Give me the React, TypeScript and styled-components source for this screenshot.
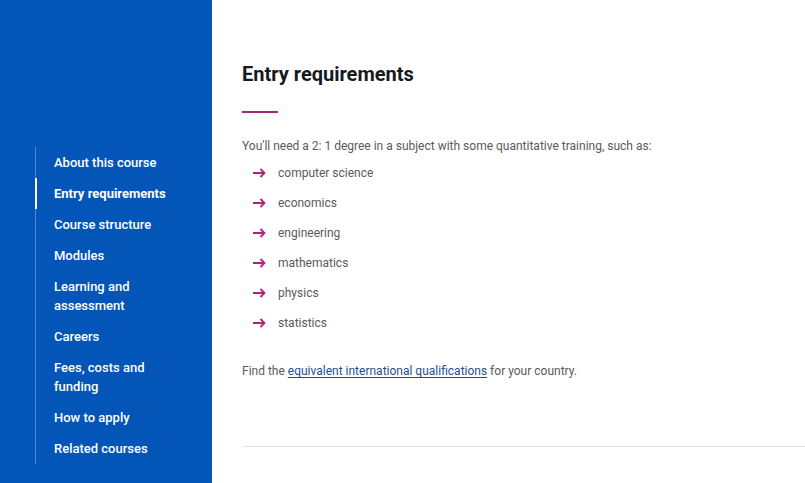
import React from "react";
import styled, { createGlobalStyle } from "styled-components";

const GlobalStyle = createGlobalStyle`
  html, body {
    margin: 0;
    padding: 0;
    background: #ffffff;
    font-family: Roboto, "Liberation Sans", Arial, sans-serif;
  }
  * {
    box-sizing: border-box;
  }
`;

const Page = styled.div`
  display: flex;
  width: 805px;
  height: 483px;
  overflow: hidden;
`;

const Sidebar = styled.aside`
  width: 212px;
  flex-shrink: 0;
  background: #0455b8;
  padding: 147px 0 0 35px;
`;

const NavList = styled.ul`
  list-style: none;
  margin: 0;
  padding: 0;
  border-left: 1px solid #4a88e2;
`;

const NavItem = styled.li<{ $active?: boolean }>`
  padding: 6px 24px 6px 18px;
  margin-left: ${({ $active }) => ($active ? "-1px" : "0")};
  border-left: ${({ $active }) => ($active ? "2px solid #ffffff" : "none")};
  padding-left: ${({ $active }) => ($active ? "17px" : "18px")};
  color: #ffffff;
  font-size: 13px;
  line-height: 19px;
  font-weight: ${({ $active }) => ($active ? 700 : 500)};
  cursor: pointer;
`;

const Main = styled.main`
  flex: 1;
  padding: 62px 0 0 30px;
`;

const Title = styled.h2`
  margin: 0;
  font-size: 20px;
  line-height: 24px;
  font-weight: 700;
  color: #141a21;
`;

const Accent = styled.div`
  width: 36px;
  height: 2px;
  margin-top: 25px;
  background: #a3267f;
`;

const Text = styled.p<{ $top: number }>`
  margin: ${({ $top }) => $top}px 0 0;
  font-size: 12px;
  line-height: 18px;
  color: #5a5a5a;
`;

const List = styled.ul`
  list-style: none;
  margin: 3px 0 0;
  padding: 0;
`;

const ListItem = styled.li`
  display: flex;
  align-items: center;
  gap: 12px;
  padding: 6px 0 6px 11px;
  font-size: 12px;
  line-height: 18px;
  color: #5a5a5a;
`;

const Link = styled.a`
  color: #1d4f8f;
  text-decoration: underline;
  text-underline-offset: 2px;
`;

const Rule = styled.hr`
  margin: 66px 0 0;
  border: none;
  border-top: 1px solid #e2e2e2;
`;

const Arrow = () => (
  <svg width="13" height="10" viewBox="0 0 13 10">
    <path d="M0 5h11.5M7.5 1l4 4-4 4" stroke="#b3237e" strokeWidth="1.8" fill="none" />
  </svg>
);

const navItems = [
  "About this course",
  "Entry requirements",
  "Course structure",
  "Modules",
  "Learning and assessment",
  "Careers",
  "Fees, costs and funding",
  "How to apply",
  "Related courses",
];

const subjects = [
  "computer science",
  "economics",
  "engineering",
  "mathematics",
  "physics",
  "statistics",
];

export default function App() {
  return (
    <>
      <GlobalStyle />
      <Page>
        <Sidebar>
          <NavList>
            {navItems.map((item) => (
              <NavItem key={item} $active={item === "Entry requirements"}>
                {item}
              </NavItem>
            ))}
          </NavList>
        </Sidebar>
        <Main>
          <Title>Entry requirements</Title>
          <Accent />
          <Text $top={24}>
            You'll need a 2: 1 degree in a subject with some quantitative training, such as:
          </Text>
          <List>
            {subjects.map((s) => (
              <ListItem key={s}>
                <Arrow />
                {s}
              </ListItem>
            ))}
          </List>
          <Text $top={24}>
            Find the <Link href="#">equivalent international qualifications</Link> for your country.
          </Text>
          <Rule />
        </Main>
      </Page>
    </>
  );
}
